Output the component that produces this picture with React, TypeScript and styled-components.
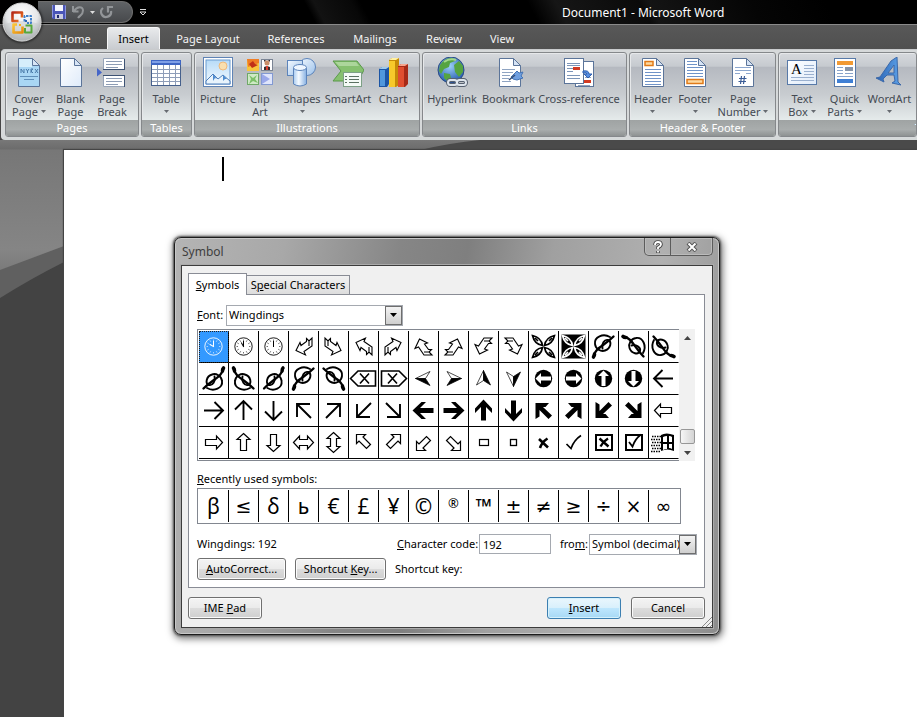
import React, { ReactNode } from 'react';
import styled, { createGlobalStyle, css } from 'styled-components';

const uiFont = '"Noto Sans", "Open Sans", sans-serif';
const dialogFont = '"Noto Sans", "DejaVu Sans Condensed", sans-serif';

const GlobalStyle = createGlobalStyle`
  *, *::before, *::after { box-sizing: border-box; }
  body { margin: 0; background: #464646; }
  button, input, select { font: inherit; color: inherit; margin: 0; padding: 0; }
  svg { display: block; }
`;

/* ---------- window chrome ---------- */

const AppWindow = styled.div`
  position: relative;
  display: flex;
  flex-direction: column;
  height: 100vh;
  min-height: 660px;
  overflow: hidden;
  font: 11px/13px ${uiFont};
`;

const TitleBar = styled.header`
  display: flex;
  align-items: center;
  height: 25px;
  flex: none;
  padding-left: 38px;
  color: #fff;
  border-bottom: 1px solid #8a8a8a;
  background: linear-gradient(62deg, #000 34%, #121212 35%, #080808 39%, #000 40%, #000 58%, #161616 61%, #0a0a0a 70%, #141414 71%, #050505 82%, #000 90%);
`;

const QuickAccess = styled.div`
  display: flex;
  align-items: center;
  gap: 5px;
  width: 95px;
  height: 22px;
  padding-left: 14px;
  border: 1px solid #6d6d6d;
  border-left: 0;
  border-radius: 0 11px 11px 0;
  background: linear-gradient(#606366, #47494c);
`;

const IconButton = styled.button`
  display: flex;
  border: 0;
  background: none;
`;

const MoreButton = styled(IconButton)`
  margin-left: 7px;
`;

const WindowTitle = styled.h1`
  flex: 1;
  margin: 0;
  padding: 2px 0 0 416px;
  font: 12px/16px ${uiFont};
  white-space: nowrap;
`;

const OfficeButton = styled.button`
  position: absolute;
  left: 2px;
  top: 2px;
  display: flex;
  width: 40px;
  height: 40px;
  padding: 0;
  border: 0;
  border-radius: 50%;
  background: none;
  box-shadow: 0 0 3px #000;
  z-index: 2;
`;

const TabStrip = styled.nav`
  display: flex;
  flex: none;
  height: 24px;
  padding-left: 45px;
  background: linear-gradient(#585858, #505050);
`;

const RibbonTab = styled.button<{ $width: number; $active?: boolean }>`
  width: ${p => p.$width}px;
  border: 0;
  background: none;
  color: #f4f4f4;
  text-align: center;
  white-space: nowrap;
  padding-top: 2px;
  ${p => p.$active && css`
    margin: 2px 2px 0;
    padding-top: 0;
    color: #000;
    border-radius: 3px 3px 0 0;
    border: 1px solid #f6f6f6;
    border-bottom: 0;
    background: linear-gradient(#e8eaec, #c9ccd0);
  `}
`;

const Ribbon = styled.div`
  display: flex;
  flex: none;
  gap: 2px;
  height: 91px;
  padding: 2px 0 1px 3px;
  margin-left: 1px;
  border: 1px solid #d8dadb;
  border-right: 0;
  border-top-color: #c9cbcd;
  border-bottom: 2px solid #d5d9d9;
  border-radius: 4px 0 0 4px;
  background: #d6d9da;
  overflow: hidden;
`;

const Group = styled.section<{ $width: number; $last?: boolean }>`
  display: flex;
  flex-direction: column;
  flex: ${p => (p.$last ? '1 0' : '0 0')} ${p => p.$width}px;
  border: 1px solid #85888b;
  border-radius: 3px;
  overflow: hidden;
  background: linear-gradient(#d6d9dd 0, #c6cacf 16%, #b5b9c0 17%, #c8ccd0 50%, #e6ecec 82%);
  box-shadow: inset 1px 1px 0 #e6e8ea;
`;

const GroupItems = styled.div`
  display: flex;
  flex: 1;
  padding: 4px 2px 0;
`;

const GroupTitle = styled.h2<{ $shift?: boolean }>`
  margin: 0;
  padding-left: ${p => (p.$shift ? 136 : 0)}px;
  height: 16px;
  font: 11px/16px ${uiFont};
  text-align: ${p => (p.$shift ? 'left' : 'center')};
  color: #fff;
  white-space: nowrap;
  background: linear-gradient(#9fa3a3, #a9adad 60%, #8e9292);
`;

const Tool = styled.button<{ $width: number }>`
  display: flex;
  flex-direction: column;
  align-items: center;
  gap: 3px;
  flex: 0 0 ${p => p.$width}px;
  border: 0;
  background: none;
  color: #444a52;
  white-space: nowrap;
`;

const ToolLabel = styled.span`
  display: flex;
  flex-direction: column;
  align-items: center;
`;

const ToolLine = styled.span`
  display: flex;
  align-items: center;
  gap: 3px;
  height: 13px;
`;

const Workspace = styled.main`
  position: relative;
  display: flex;
  flex: 1;
  padding: 10px 0 0 64px;
  background: linear-gradient(#787878, #6c6c6c 9px, #777 10px, #858585 110px, #555 200px, #444);
`;

const Backdrop = styled.svg`
  position: absolute;
  left: 0;
  top: 0;
  width: 100%;
  height: 100%;
`;

const Paper = styled.article`
  position: relative;
  flex: 1;
  padding: 7px 0 0 158px;
  background: #fff;
  box-shadow: -1px -1px 1px #444;
`;

const Caret = styled.span`
  display: block;
  width: 2px;
  height: 24px;
  background: #000;
`;

/* ---------- dialog ---------- */

const Dialog = styled.section`
  position: absolute;
  left: 174px;
  top: 237px;
  width: 546px;
  padding: 0 6px 6px;
  border: 1px solid #1c1c1c;
  border-radius: 7px;
  color: #000;
  font: 11px/14px ${dialogFont};
  background: linear-gradient(100deg, #b4b4b4 0, #a8a8a8 18%, #868686 37%, #7f7f7f 48%, #a0a0a0 62%, #b0b0b0 80%, #8c8c8c 100%);
  box-shadow: inset 0 0 0 1px #c8c8c8, 0 0 2px 1px #555, 1px 2px 7px 2px rgba(0, 0, 0, 0.5);
`;

const DialogBar = styled.header`
  display: flex;
  justify-content: space-between;
  height: 27px;
`;

const DialogTitle = styled.h2`
  margin: 0;
  padding: 6px 0 0 1px;
  font: 12px/16px ${uiFont};
  color: #3e3e3e;
`;

const WindowButtons = styled.div`
  display: flex;
  height: 18px;
  border: 1px solid #5c5c5c;
  border-top: 0;
  border-radius: 0 0 5px 5px;
  box-shadow: inset 0 0 0 1px #bbb;
`;

const WindowButton = styled.button<{ $width: number }>`
  display: flex;
  align-items: center;
  justify-content: center;
  width: ${p => p.$width}px;
  border: 0;
  background: none;
  & + & { border-left: 1px solid #5c5c5c; }
`;

const Client = styled.div`
  position: relative;
  padding: 7px 7px 8px 6px;
  border: 1px solid #3c3c3c;
  background: #f0f0f0;
  box-shadow: 0 0 0 1px #aaa;
`;

const TabList = styled.div`
  display: flex;
  align-items: flex-end;
  height: 21px;
`;

const DialogTab = styled.button<{ $width: number; $active?: boolean }>`
  width: ${p => p.$width}px;
  height: ${p => (p.$active ? 22 : 19)}px;
  border: 1px solid #898c95;
  background: linear-gradient(#f2f2f2, #ddd);
  white-space: nowrap;
  ${p => p.$active ? css`
    position: relative;
    margin-bottom: -1px;
    border-bottom: 0;
    background: #fff;
  ` : css`
    border-left: 0;
    border-bottom: 0;
  `}
`;

const Panel = styled.div`
  display: flex;
  flex-direction: column;
  padding: 10px 7px 7px 8px;
  border: 1px solid #898c95;
  background: #fff;
`;

const Row = styled.div`
  display: flex;
  align-items: center;
`;

const FontRow = styled(Row)`
  height: 20px;
  margin-bottom: 4px;
`;

const FieldLabel = styled.label<{ $width?: number }>`
  width: ${p => (p.$width ? `${p.$width}px` : 'auto')};
  white-space: nowrap;
`;

const Combo = styled.span<{ $width: number }>`
  position: relative;
  display: flex;
  width: ${p => p.$width}px;
  height: 21px;
  border: 1px solid #a5a9b0;
  background: #fff;
`;

const ComboSelect = styled.select`
  flex: 1;
  min-width: 0;
  padding: 0 17px 0 2px;
  border: 0;
  outline: 0;
  appearance: none;
  background: transparent;
`;

const ComboArrow = styled.span`
  position: absolute;
  right: 0;
  top: 0;
  bottom: 0;
  display: flex;
  align-items: center;
  justify-content: center;
  width: 17px;
  border: 1px solid #6e6e6e;
  background: linear-gradient(#f3f3f3, #cfcfcf);
  pointer-events: none;
`;

const SymbolArea = styled.div`
  display: flex;
`;

const SymbolFrame = styled.div`
  padding: 1px 0 1px 1px;
  border: 1px solid #828790;
  border-right: 0;
`;

const SymbolGrid = styled.div`
  display: grid;
  grid-template-columns: repeat(16, 30px);
  grid-auto-rows: 32px;
`;

const SymbolCell = styled.button<{ $selected?: boolean }>`
  display: flex;
  border: 0;
  border-right: 1px solid #000;
  border-bottom: 1px solid #000;
  background: #fff;
  &:nth-child(16n) { border-right-color: #fff; }
  ${p => p.$selected && css`
    color: #fff;
    background: #3399ff;
    outline: 1px dotted #222;
    outline-offset: -1px;
  `}
`;

const ScrollTrack = styled.div`
  display: flex;
  flex-direction: column;
  align-items: center;
  width: 16px;
  background: #f1f1f1;
`;

const ScrollStep = styled.button`
  display: flex;
  align-items: center;
  justify-content: center;
  width: 16px;
  height: 17px;
  border: 0;
  background: none;
`;

const ScrollThumb = styled.div`
  width: 15px;
  height: 15px;
  margin-top: auto;
  border: 1px solid #979797;
  border-radius: 2px;
  background: linear-gradient(90deg, #f6f6f6, #d4d4d4);
`;

const RecentTitle = styled.h3`
  margin: 11px 0 2px;
  font: inherit;
`;

const RecentGrid = styled.div`
  display: grid;
  grid-template-columns: repeat(16, 30px);
  align-self: flex-start;
  padding: 1px;
  border: 1px solid #828790;
`;

const RecentCell = styled.button<{ $kind: 'letter' | 'math' | 'mark' }>`
  height: 32px;
  border: 0;
  border-right: 1px solid #000;
  background: #fff;
  font: 21px/30px "Noto Sans", "DejaVu Sans", sans-serif;
  ${p => p.$kind === 'math' && css`
    font: 19px/30px "DejaVu Sans", sans-serif;
  `}
  ${p => p.$kind === 'mark' && css`
    font-size: 13px;
    line-height: 24px;
    padding-bottom: 6px;
  `}
  &:last-child { border-right-color: #fff; }
`;

const CodeRow = styled(Row)`
  height: 22px;
  margin-top: 9px;
`;

const CodeName = styled.span`
  width: 200px;
`;

const CodeInput = styled.input`
  width: 72px;
  height: 20px;
  margin: 0 9px 0 4px;
  padding: 0 3px;
  border: 1px solid #a5a9b0;
  background: #fff;
`;

const KeyRow = styled(Row)`
  gap: 9px;
  margin-top: 3px;
`;

const PushButton = styled.button<{ $width: number; $primary?: boolean }>`
  width: ${p => p.$width}px;
  height: 22px;
  border: 1px solid #707070;
  border-radius: 3px;
  white-space: nowrap;
  background: linear-gradient(#f4f4f4 0, #ebebeb 48%, #dcdcdc 52%, #cfcfcf);
  box-shadow: inset 0 0 0 1px #fbfbfb;
  ${p => p.$primary && css`
    border-color: #3c7fb1;
    background: linear-gradient(#eaf6fd 0, #d9f0fc 48%, #bee6fd 52%, #a7d9f5);
    box-shadow: inset 0 0 0 1px #d5f1fc;
  `}
`;

const Actions = styled(Row)`
  gap: 10px;
  margin-top: 9px;
`;

const Spacer = styled.span`
  flex: 1;
`;

const Grip = styled.svg`
  position: absolute;
  right: 0;
  bottom: 0;
`;

/* ---------- small drawings ---------- */

const Down = ({ fill = '#666a70', w = 5 }: { fill?: string; w?: number }) => (
  <svg width={w} height={(w + 1) / 2} viewBox="0 0 6 3" preserveAspectRatio="none"><path d="M0 0h6L3 3z" fill={fill} /></svg>
);

const OfficeLogo = () => (
  <svg width="40" height="40" viewBox="0 0 40 40">
    <defs>
      <radialGradient id="orb" cx=".5" cy=".3" r=".75">
        <stop offset="0" stopColor="#fff" /><stop offset=".55" stopColor="#e4e6e8" /><stop offset="1" stopColor="#85888c" />
      </radialGradient>
      <linearGradient id="red" x1="0" y1="0" x2="1" y2="1"><stop offset="0" stopColor="#b42818" /><stop offset="1" stopColor="#f27a22" /></linearGradient>
      <linearGradient id="yel" x1="0" y1="0" x2="1" y2="1"><stop offset="0" stopColor="#fbc63a" /><stop offset="1" stopColor="#e58a0c" /></linearGradient>
    </defs>
    <circle cx="20" cy="20" r="19" fill="url(#orb)" stroke="#d8d8d8" />
    <path d="M3 22Q20 16 37 22A17 17 0 0 1 3 22" fill="#c6c9cc" opacity=".5" />
    <g fill="none" strokeWidth="2.600" strokeLinejoin="round">
      <path d="M16.500 19h-6v-8.500h9.500v5" stroke="url(#red)" />
      <path d="M22.500 19.500v-5.500h6.500v7h-4" stroke="#3e7fc9" strokeWidth="2" strokeDasharray="2.500 1" />
      <path d="M15 22.500h-3.500v8h9v-6" stroke="url(#yel)" />
      <path d="M23 26v4.500h6.500v-7h-6" stroke="#57a83c" strokeWidth="2" />
    </g>
    <rect x="23" y="18" width="2" height="2" fill="#2d64b4" />
    <rect x="17" y="22" width="2" height="2" fill="#f5b020" />
  </svg>
);

const SaveIcon = () => (
  <svg width="14" height="14" viewBox="0 0 14 14">
    <path d="M0 0h13l1 1v13H1l-1-1z" fill="#4a55b8" />
    <path d="M0 0h1v13l-1-1zM13 0l1 1v13h-1z" fill="#8a93e0" />
    <rect x="3" y="0" width="8" height="6" fill="#f3f5ff" />
    <rect x="3" y="9" width="8" height="5" fill="#c9cbe0" />
    <rect x="5" y="10" width="2" height="3" fill="#20286c" />
  </svg>
);

const UndoIcon = () => (
  <svg width="14" height="14" viewBox="0 0 14 14" fill="none" stroke="#929598" strokeWidth="2">
    <path d="M2 6.500h5.500M2 1v6M3 6C6 1 12 1 12 5.500S9 10 7 13" />
  </svg>
);

const RedoIcon = () => (
  <svg width="14" height="14" viewBox="0 0 14 14" fill="none" stroke="#929598" strokeWidth="2.200">
    <path d="M3 3a5 5 0 1 0 8 3" /><path d="M13 2H8v5.500" />
  </svg>
);

const Sheet = ({ x = 5, y = 1, w = 22, h = 29, fill = '#fff', children }: { x?: number; y?: number; w?: number; h?: number; fill?: string; children?: ReactNode }) => (
  <g transform={`translate(${x} ${y})`}>
    <path d={`M.5.500H${w - 7.5}l7 7V${h - 0.5}H.5z`} fill={fill} stroke="#5b7499" />
    <path d={`M${w - 7.5}.500v7h7z`} fill="#d7e4f5" stroke="#5b7499" strokeLinejoin="round" />
    {children}
  </g>
);

const icons: Record<string, ReactNode> = {
  cover: (
    <Sheet fill="#a9d6f4">
      <path d="M1 1h13v8H1z" fill="#d6eefb" />
      <path d="M3 15v-4l3 4v-4M8 11l1.500 2 1.500-2M9.500 13v2M13 15v-4h2l-2 2 2 2M17 11l3 4M20 11l-3 4" fill="none" stroke="#4a7ba9" />
      <path d="M2 18.500h18M6 21.500h10" stroke="#5f8fb9" />
    </Sheet>
  ),
  blank: <Sheet fill="url(#paper)" />,
  pageBreak: (
    <g>
      <path d="M7.500 1.500h21v11h-21zM7.500 29.500v-11h21v11z" fill="#fff" stroke="#97a4b8" />
      <path d="M7 12.500h22M7 18.500h22M28.500 2v11M28.500 18v12" stroke="#3d5273" />
      <path d="M10 4.500h16M10 7.500h16M10 10.500h12M10 21.500h16M10 24.500h16M10 27.500h12" stroke="#8d9cb4" />
      <path d="M1 11l5 4.500-5 4z" fill="#4666c8" />
    </g>
  ),
  table: (
    <g>
      <rect x="1.500" y="3.500" width="29" height="25" fill="#fff" stroke="#46608c" />
      <rect x="1" y="3" width="30" height="5" fill="#3f66c4" />
      <rect x="2" y="4" width="28" height="2" fill="#7f9fe6" />
      <path d="M2 12.500h28M2 16.500h28M2 20.500h28M2 24.500h28M7.500 8v20M13.500 8v20M19.500 8v20M25.500 8v20" stroke="#8e9db8" />
    </g>
  ),
  picture: (
    <g>
      <rect x="1.500" y=".5" width="29" height="29" fill="#fff" stroke="#5f83b5" />
      <rect x="4" y="3" width="24" height="24" fill="url(#sky)" stroke="#6b9bd0" />
      <circle cx="21" cy="9" r="4" fill="#f9dfae" stroke="#eeb97c" />
      <path d="M4 24l7-7 5 5 5-4 7 6v3H4z" fill="#e8f3fc" stroke="#4e7fbb" />
      <path d="M11 17l4 5-2-1-2 3zM21 18l4 4-2 0-2 2z" fill="#4f8cd0" />
    </g>
  ),
  clip: (
    <g>
      <rect x="3" y="2" width="12" height="12" fill="#f8c53c" /><path d="M3 2h12v4L4 10z" fill="#ef7d25" /><path d="M5 7l4-3 2 3 3 1-6 3z" fill="#c03018" />
      <rect x="17.500" y="2.500" width="11" height="11" fill="#fff" stroke="#7a8494" /><circle cx="23" cy="6" r="2.500" fill="#c98d68" /><path d="M20 5q3-4 6 0v-2h-6zM20 13v-3l3-1 3 1v3z" fill="#3b2b2b" /><path d="M22 9h2v4h-2z" fill="#d94030" />
      <rect x="3.500" y="16.500" width="11" height="11" fill="#cfe9c6" stroke="#6fa868" /><path d="M5 18l4 3 4-3-2 4 3 4-5-2-4 3 2-5z" fill="#7cc069" />
      <rect x="17.500" y="16.500" width="11" height="11" fill="#dfe5fb" stroke="#8299d2" /><path d="M18 17l8 5-8 5z" fill="#9aa8ea" />
    </g>
  ),
  shapes: (
    <g stroke="#5c84bb">
      <circle cx="21" cy="10" r="8.500" fill="url(#steel)" />
      <rect x="1.500" y="3.500" width="15" height="15" fill="url(#steel)" />
      <path d="M7.500 11v16q6.500 4 13 0V11" fill="url(#tube)" /><ellipse cx="14" cy="10.500" rx="6.500" ry="3" fill="#eef6ff" />
    </g>
  ),
  smart: (
    <g>
      <path d="M1 4h24l7 9-6 11H1l8-10z" fill="#86c06f" stroke="#5a994b" /><path d="M3 5h21l3 4H7z" fill="#acd69b" />
      <rect x="11.500" y="15.500" width="18" height="14" fill="#f4faf6" stroke="#7da086" />
      <path d="M17 19.500h10M17 22.500h10M17 25.500h10M13 19.500h2M13 22.500h2M13 25.500h2" stroke="#5b7162" />
    </g>
  ),
  chart: (
    <g>
      <path d="M2 12l3-2h7v17l-2 3H2z" fill="#1c55a5" /><path d="M3 13h5v16H3z" fill="#4f97dc" /><path d="M2 12l3-2h7l-3 2z" fill="#9dc9ee" />
      <path d="M12 3l3-2h7v27l-3 2h-7z" fill="#c68a08" /><path d="M12 4h6v26h-6z" fill="#f7c92b" /><path d="M12 3l3-2h7l-3 2z" fill="#fff0a0" />
      <path d="M21 9l3-2h7v20l-3 3h-7z" fill="#a62a18" /><path d="M21 10h6v20h-6z" fill="#e04e30" /><path d="M21 9l3-2h7l-3 2z" fill="#f7a48c" />
    </g>
  ),
  link: (
    <g>
      <circle cx="15" cy="13" r="13" fill="url(#globe)" stroke="#2b4c83" />
      <path d="M4 8Q9 0 17 1l2 3-5 2-1 4-5 2-3 5-2-3zM18 8l5-4 4 5 0 6-4 5-4-5zM8 16l6 1 1 4-3 4-4-4z" fill="#55a441" />
      <path d="M8 5q6-4 12-2" stroke="#a4d88e" strokeWidth="2" fill="none" />
      <g fill="none" strokeWidth="4" stroke="#566070"><rect x="12" y="23" width="9" height="5" rx="2.500" /><rect x="21" y="23" width="9" height="5" rx="2.500" /></g>
      <g fill="none" strokeWidth="2" stroke="#dde4ec"><rect x="12" y="23" width="9" height="5" rx="2.500" /><rect x="21" y="23" width="9" height="5" rx="2.500" /></g>
    </g>
  ),
  bookmark: (
    <g>
      <Sheet x={6}><path d="M3 11.500h13M3 14.500h11M3 17.500h8M3 20.500h7M3 23.500h9" stroke="#8fa4c2" /></Sheet>
      <path d="M18 20l6-6 2 2 4-1-2 4 2 2-6 2-4-1z" fill="#6f9fe0" stroke="#4473b4" /><path d="M16 23l6-5" stroke="#334d77" strokeWidth="1.600" />
    </g>
  ),
  cross: (
    <g>
      <rect x="12.500" y="4.500" width="18" height="25" fill="#fff" stroke="#5b7499" /><path d="M20 23h8v3h-8z" fill="#d13a22" /><path d="M22 20.500h6M15 28.500h12" stroke="#90a2bd" />
      <rect x="1.500" y="1.500" width="19" height="25" fill="#fff" stroke="#5b7499" />
      <path d="M4 6.500h13M4 8.500h13M4 11.500h6M4 14.500h6M4 18.500h13M4 21.500h13" stroke="#7c95b8" /><path d="M10 10h7v3h-7z" fill="#d13a22" />
      <path d="M20 14q6-1 6 3h3l-4 4-4-4h3q0-2-4-1z" fill="#568de0" stroke="#2f5fae" />
    </g>
  ),
  header: (
    <Sheet><rect x="3" y="3.500" width="8" height="4" fill="#fdd9a0" stroke="#e07a18" strokeWidth="1.500" /><path d="M3 11.500h16M3 14.500h16M3 17.500h16M3 20.500h16M3 23.500h16M3 26.500h16" stroke="#6f93c8" /></Sheet>
  ),
  footer: (
    <Sheet><path d="M3 3.500h10M3 6.500h10M3 9.500h16M3 12.500h16M3 15.500h16M3 18.500h16" stroke="#6f93c8" /><rect x="3" y="21.500" width="16" height="4" fill="#fdd9a0" stroke="#e07a18" strokeWidth="1.500" /></Sheet>
  ),
  number: (
    <Sheet><path d="M3 9.500h16M3 12.500h16M3 15.500h5M14 15.500h5" stroke="#8ea8cf" /><path d="M9.500 18l-1 8M12.500 18l-1 8M7 20.500h7.500M6.500 23.500h7.500" stroke="#3b5c96" strokeWidth="1.200" /></Sheet>
  ),
  textBox: (
    <g>
      <rect x="1.500" y="3.500" width="29" height="24" fill="url(#paper)" stroke="#5779a8" />
      <path d="M18 8.500h10M18 11.500h10M18 14.500h10M18 17.500h10M5 20.500h23M5 23.500h23" stroke="#9ab0cf" />
      <text x="5" y="17" fontFamily="Liberation Serif, serif" fontSize="15">A</text>
    </g>
  ),
  quick: (
    <g>
      <rect x="5.500" y="1.500" width="21" height="28" fill="#fff" stroke="#5779a8" />
      <rect x="8" y="4" width="16" height="4" fill="#f29a33" /><path d="M8 10.500h6M8 13.500h6M16 16.500h8M8 16.500h6M8 19.500h16" stroke="#8aa4ca" /><rect x="16" y="10" width="8" height="4" fill="#8795a9" /><rect x="8" y="22" width="16" height="4" fill="#3f7fd4" />
    </g>
  ),
  wordArt: (
    <g fill="url(#word)" stroke="#3c68a8" strokeLinejoin="round">
      <path d="M17 4l6-4 1 25 3 3-9-2 3-2-1-6h-7l-4 4 1 3-8-4 4-1zM20 8l-6 8h6z" fillRule="evenodd" />
    </g>
  ),
};

const IconDefs = () => (
  <svg width="0" height="0" aria-hidden="true">
    <defs>
      <linearGradient id="paper" x1="0" y1="0" x2="1" y2="1"><stop offset="0" stopColor="#fff" /><stop offset="1" stopColor="#dfebfa" /></linearGradient>
      <linearGradient id="sky" x1="0" y1="0" x2="0" y2="1"><stop offset="0" stopColor="#b7dbf8" /><stop offset="1" stopColor="#f3faff" /></linearGradient>
      <linearGradient id="steel" x1="0" y1="0" x2="1" y2="1"><stop offset="0" stopColor="#f3f9ff" /><stop offset="1" stopColor="#9cc1ea" /></linearGradient>
      <linearGradient id="tube"><stop offset="0" stopColor="#a9cbf0" /><stop offset=".4" stopColor="#f5faff" /><stop offset="1" stopColor="#86b0e2" /></linearGradient>
      <radialGradient id="globe" cx=".45" cy=".35" r=".7"><stop offset="0" stopColor="#9cd0f8" /><stop offset="1" stopColor="#1b50a8" /></radialGradient>
      <linearGradient id="word"><stop offset="0" stopColor="#2a63b4" /><stop offset="1" stopColor="#5fa4ea" /></linearGradient>
    </defs>
  </svg>
);

/* ---------- symbol glyphs, drawn on a 29 x 31 cell ---------- */

const at = (m: string, node: ReactNode) => (
  <g transform={`translate(14.5 15.5) ${m} translate(-14.5 -15.5)`}>{node}</g>
);

const clock = (hour: number) => (
  <g fill="none" stroke="currentColor">
    <circle cx="14.500" cy="15.500" r="8.700" strokeWidth=".9" />
    {Array.from({ length: 12 }, (_, i) => (
      <path key={i} d="M14.500 8.600v1.200" strokeWidth=".7" transform={`rotate(${i * 30} 14.5 15.5)`} />
    ))}
    <path d="M14.500 15.500v-5.500" />
    <path d="M14.500 16v-5" transform={`rotate(${hour * 30} 14.5 15.5)`} />
  </g>
);

const ribbonArrow = <path d="M17.500 7.500L20 10l3-3v8l-8 5.500 1.500 3.500-9.500-4.500 4-8 1 3 5.500-4zM20 10v5" fill="none" stroke="currentColor" strokeWidth="1.100" />;
const petal = (color: string) => (
  <g fill="none" stroke={color} strokeWidth="1.700">
    {[0, 90, 180, 270].map(r => (
      <path key={r} d="M13.500 14.500C7.500 13.500 4.500 9 3.500 4.500 8 5.500 12.500 8.500 13.500 14.500zM6 7l3 3" transform={`rotate(${r} 14.5 15.5)`} />
    ))}
  </g>
);
const vine = (
  <g fill="none" stroke="currentColor" strokeLinecap="round">
    <path d="M4.500 25.500C6 17 15 15 24.500 5.500" strokeWidth="2.400" />
    <path d="M21 6C14 2 5 6 6 13c.5 5 6 8 10 6.500 6-2 7-9 3-10.500-3.500-1-7 4-5.500 8.500" strokeWidth="1.900" />
    <path d="M4.500 26q1-1 1-3" strokeWidth="3.600" />
  </g>
);
const erase = <path d="M1.500 15.500L9 8h17.500v15H9zM11 10.500l9 10M20 10.500l-9 10" fill="none" stroke="currentColor" strokeWidth="1.600" />;
const dart = <g><path d="M6.500 15.500L21 8.500l-4.500 7z" fill="#fff" stroke="currentColor" strokeWidth=".7" /><path d="M6.500 15.500L21 22.500l-4.500-7z" fill="currentColor" stroke="currentColor" strokeWidth=".7" /></g>;
const disc = <g><circle cx="14.500" cy="15.500" r="8.700" fill="currentColor" /><path d="M6.500 15.500l5.500-5.500v3.500H22v4H12v3.500z" fill="#fff" /></g>;
const thin = <path d="M24 15.500H6M13.500 7l-8.500 8.500 8.500 8.500" fill="none" stroke="currentColor" strokeWidth="1.900" />;
const thinDiagonal = <path d="M8 22V9h13M8.500 9.500L22 23" fill="none" stroke="currentColor" strokeWidth="1.900" />;
const heavy = <path d="M3.500 15.500l9-8.500h4.500l-6 6H24.500v5H11l6 6h-4.500z" fill="currentColor" />;
const heavyDiagonal = <path d="M6.500 8H20l-3.500 4H14l9 8.500-3.500 3.500-9-9v6.500L6.500 24z" fill="currentColor" />;
const hollow = <path d="M5.500 15.500l6-6.500v3.500h11v6h-11V22z" fill="none" stroke="currentColor" strokeWidth="1.200" />;
const hollowTwo = <path d="M4.500 15.500l6-6.500v3.500h8V9l6 6.500-6 6.500v-3.500h-8V22z" fill="none" stroke="currentColor" strokeWidth="1.200" />;
const hollowDiagonal = <path d="M7.500 7.500h9l-2.500 2.500 7.500 7.500-4 4-7.500-7.500-2.500 2.500z" fill="none" stroke="currentColor" strokeWidth="1.200" />;
const windows = (
  <g>
    <path d="M12 8q5-3 13 0v16q-7-3-13 0z" fill="currentColor" />
    <path d="M14 10q2-1 4-1v6h-4zM20 9q2 0 3 1v5h-3zM14 17h4v5q-2 0-4 1zM20 17h3v5q-1-1-3-1z" fill="#fff" />
    <path d="M3 9.500h9M2 12.500h10M3 15.500h9M2 18.500h10M3 21.500h9M2 24.500h9" stroke="currentColor" strokeWidth="1.500" strokeDasharray="1.500 1" />
  </g>
);

const glyphs: ReactNode[] = [
  clock(10), clock(11), clock(12),
  ribbonArrow, at('scale(-1 1)', ribbonArrow), at('scale(1 -1)', ribbonArrow), at('scale(-1 -1)', ribbonArrow),
  at('rotate(90)', ribbonArrow), at('rotate(90) scale(1 -1)', ribbonArrow), at('rotate(-90) scale(1 -1)', ribbonArrow), at('rotate(-90)', ribbonArrow),
  petal('currentColor'),
  <g key="leaf"><path d="M2.500 3.500h24v24h-24z" fill="currentColor" />{petal('#fff')}</g>,
  vine, at('rotate(90)', vine), at('scale(-1 1) rotate(-90) scale(1 -1)', vine),
  at('rotate(180)', vine), at('scale(1 -1)', vine), at('rotate(180) scale(.95 1)', vine), vine, at('scale(-1 1)', vine),
  erase, at('scale(-1 1)', erase),
  dart, at('scale(-1 1)', dart), at('rotate(90) scale(1 -1)', dart), at('rotate(-90)', dart),
  disc, at('scale(-1 1)', disc), at('rotate(90)', disc), at('rotate(-90)', disc),
  thin,
  at('scale(-1 1)', thin), at('rotate(90)', thin), at('rotate(-90)', thin),
  thinDiagonal, at('scale(-1 1)', thinDiagonal), at('scale(1 -1)', thinDiagonal), at('scale(-1 -1)', thinDiagonal),
  heavy, at('scale(-1 1)', heavy), at('rotate(90)', heavy), at('rotate(-90)', heavy),
  heavyDiagonal, at('scale(-1 1)', heavyDiagonal), at('scale(1 -1)', heavyDiagonal), at('scale(-1 -1)', heavyDiagonal),
  hollow,
  at('scale(-1 1)', hollow), at('rotate(90)', hollow), at('rotate(-90)', hollow), hollowTwo, at('rotate(90)', hollowTwo),
  hollowDiagonal, at('scale(-1 1)', hollowDiagonal), at('scale(1 -1)', hollowDiagonal), at('scale(-1 -1)', hollowDiagonal),
  <rect key="wide" x="10.500" y="12.500" width="9" height="6" fill="none" stroke="currentColor" strokeWidth="1.200" />,
  <rect key="small" x="11.500" y="12.500" width="6" height="6" fill="none" stroke="currentColor" strokeWidth="1.300" />,
  <path key="cross" d="M10 12l9 8.500M18.500 11.500Q13 15 11 21" fill="none" stroke="currentColor" strokeWidth="2.600" />,
  <path key="tick" d="M7.500 17l4.500 4.500Q15 13 22 8.500" fill="none" stroke="currentColor" strokeWidth="1.700" />,
  <g key="boxCross" fill="none" stroke="currentColor" strokeWidth="2"><path d="M7 8h16v15H7z" /><path d="M10.500 11.500l9 8M19 11.500q-5 3-7.500 8" strokeWidth="2.400" /></g>,
  <g key="boxTick" fill="none" stroke="currentColor" strokeWidth="2"><path d="M7 8h16v15H7z" /><path d="M10 15l3.500 4.500Q16 12 22 7.500" strokeWidth="1.800" /></g>,
  windows,
];

const recent = ['β', '≤', 'δ', 'ь', '€', '£', '¥', '©', '®', '™', '±', '≠', '≥', '÷', '×', '∞'];
const kindOf = (s: string) => (s === '®' ? 'mark' : '≤±≠≥÷×∞'.includes(s) ? 'math' : 'letter');

/* ---------- ribbon content ---------- */

type ToolSpec = { icon: string; lines: string[]; width: number; menu?: boolean };
type GroupSpec = { title: string; width: number; tools: ToolSpec[] };

const groups: GroupSpec[] = [
  { title: 'Pages', width: 134, tools: [
    { icon: 'cover', lines: ['Cover', 'Page'], width: 42, menu: true },
    { icon: 'blank', lines: ['Blank', 'Page'], width: 41 },
    { icon: 'pageBreak', lines: ['Page', 'Break'], width: 42 },
  ] },
  { title: 'Tables', width: 51, tools: [{ icon: 'table', lines: ['Table', ''], width: 44, menu: true }] },
  { title: 'Illustrations', width: 226, tools: [
    { icon: 'picture', lines: ['Picture'], width: 42 },
    { icon: 'clip', lines: ['Clip', 'Art'], width: 42 },
    { icon: 'shapes', lines: ['Shapes', ''], width: 42, menu: true },
    { icon: 'smart', lines: ['SmartArt'], width: 50 },
    { icon: 'chart', lines: ['Chart'], width: 40 },
  ] },
  { title: 'Links', width: 205, tools: [
    { icon: 'link', lines: ['Hyperlink'], width: 54 },
    { icon: 'bookmark', lines: ['Bookmark'], width: 59 },
    { icon: 'cross', lines: ['Cross-reference'], width: 82 },
  ] },
  { title: 'Header & Footer', width: 147, tools: [
    { icon: 'header', lines: ['Header', ''], width: 42, menu: true },
    { icon: 'footer', lines: ['Footer', ''], width: 42, menu: true },
    { icon: 'number', lines: ['Page', 'Number'], width: 54, menu: true },
  ] },
  { title: 'Text', width: 136, tools: [
    { icon: 'textBox', lines: ['Text', 'Box'], width: 42, menu: true },
    { icon: 'quick', lines: ['Quick', 'Parts'], width: 43, menu: true },
    { icon: 'wordArt', lines: ['WordArt', ''], width: 47, menu: true },
  ] },
];

const tabs: [string, number][] = [
  ['Home', 60], ['Insert', 53], ['Page Layout', 92], ['References', 84], ['Mailings', 74], ['Review', 64], ['View', 52],
];

const SymbolDialog = () => (
  <Dialog role="dialog" aria-labelledby="dialog-title">
    <DialogBar>
      <DialogTitle id="dialog-title">Symbol</DialogTitle>
      <WindowButtons>
        <WindowButton $width={25} aria-label="Help">
          <svg width="12" height="14" viewBox="0 0 12 14" fill="none">
            <path d="M3 5Q3 2 6 2t3 2.500Q9 6 6 7.500V9M6 11v2" stroke="#444" strokeWidth="3.500" />
            <path d="M3 5Q3 2 6 2t3 2.500Q9 6 6 7.500V9M6 11v1.500" stroke="#fff" strokeWidth="1.800" />
          </svg>
        </WindowButton>
        <WindowButton $width={42} aria-label="Close">
          <svg width="12" height="10" viewBox="0 0 12 10" fill="none">
            <path d="M2 1l8 8M10 1L2 9" stroke="#555" strokeWidth="4" />
            <path d="M2.500 1.500l7 7M9.500 1.500l-7 7" stroke="#fff" strokeWidth="2" />
          </svg>
        </WindowButton>
      </WindowButtons>
    </DialogBar>
    <Client>
      <TabList role="tablist">
        <DialogTab role="tab" aria-selected="true" $width={59} $active><u>S</u>ymbols</DialogTab>
        <DialogTab role="tab" aria-selected="false" $width={103}>S<u>p</u>ecial Characters</DialogTab>
      </TabList>
      <Panel role="tabpanel">
        <FontRow>
          <FieldLabel htmlFor="font" $width={29}><u>F</u>ont:</FieldLabel>
          <Combo $width={177}>
            <ComboSelect id="font"><option>Wingdings</option></ComboSelect>
            <ComboArrow><Down w={7} fill="#000" /></ComboArrow>
          </Combo>
        </FontRow>
        <SymbolArea>
          <SymbolFrame>
            <SymbolGrid>
              {glyphs.map((g, i) => (
                <SymbolCell key={i} $selected={i === 0} aria-label={`Character ${192 + i}`}>
                  <svg width="29" height="31" viewBox="0 0 29 31">{g}</svg>
                </SymbolCell>
              ))}
            </SymbolGrid>
          </SymbolFrame>
          <ScrollTrack>
            <ScrollStep aria-label="Scroll up"><svg width="7" height="4" viewBox="0 0 7 4"><path d="M0 4h7L3.500 0z" fill="#444" /></svg></ScrollStep>
            <ScrollThumb />
            <ScrollStep aria-label="Scroll down"><Down w={7} fill="#444" /></ScrollStep>
          </ScrollTrack>
        </SymbolArea>
        <RecentTitle><u>R</u>ecently used symbols:</RecentTitle>
        <RecentGrid>
          {recent.map(s => <RecentCell key={s} $kind={kindOf(s)}>{s}</RecentCell>)}
        </RecentGrid>
        <CodeRow>
          <CodeName>Wingdings: 192</CodeName>
          <FieldLabel htmlFor="code" $width={78}><u>C</u>haracter code:</FieldLabel>
          <CodeInput id="code" defaultValue="192" />
          <FieldLabel htmlFor="from" $width={29}>fro<u>m</u>:</FieldLabel>
          <Combo $width={108}>
            <ComboSelect id="from"><option>Symbol (decimal)</option></ComboSelect>
            <ComboArrow><Down w={7} fill="#000" /></ComboArrow>
          </Combo>
        </CodeRow>
        <KeyRow>
          <PushButton $width={89}><u>A</u>utoCorrect...</PushButton>
          <PushButton $width={91}>Shortcut <u>K</u>ey...</PushButton>
          <span>Shortcut key:</span>
        </KeyRow>
      </Panel>
      <Actions>
        <PushButton $width={74}>IME <u>P</u>ad</PushButton>
        <Spacer />
        <PushButton $width={74} $primary><u>I</u>nsert</PushButton>
        <PushButton $width={74}>Cancel</PushButton>
      </Actions>
      <Grip width="11" height="11" viewBox="0 0 11 11"><path d="M1 11L11 1M5 11l6-6M9 11l2-2" stroke="#8a8a8a" /></Grip>
    </Client>
  </Dialog>
);

export default function App() {
  return (
    <AppWindow>
      <GlobalStyle />
      <TitleBar>
        <QuickAccess>
          <IconButton aria-label="Save"><SaveIcon /></IconButton>
          <IconButton aria-label="Undo"><UndoIcon /></IconButton>
          <Down fill="#ddd" />
          <IconButton aria-label="Redo"><RedoIcon /></IconButton>
        </QuickAccess>
        <MoreButton aria-label="Customize Quick Access Toolbar">
          <svg width="6" height="7" viewBox="0 0 6 7"><path d="M0 .5h6" stroke="#ddd" /><path d="M0 3h6L3 6z" fill="none" stroke="#ddd" /></svg>
        </MoreButton>
        <WindowTitle>Document1 - Microsoft Word</WindowTitle>
      </TitleBar>
      <OfficeButton aria-label="Office"><OfficeLogo /></OfficeButton>
      <TabStrip>
        {tabs.map(([name, width]) => (
          <RibbonTab key={name} $width={width} $active={name === 'Insert'}>{name}</RibbonTab>
        ))}
      </TabStrip>
      <Ribbon>
        {groups.map(g => (
          <Group key={g.title} $width={g.width} $last={g.title === 'Text'}>
            <GroupItems>
              {g.tools.map(t => (
                <Tool key={t.icon} $width={t.width}>
                  <svg width="32" height="32" viewBox="0 0 32 32">{icons[t.icon]}</svg>
                  <ToolLabel>
                    {t.lines.map((line, i) => (
                      <ToolLine key={i}>{line}{t.menu && i === t.lines.length - 1 && <Down />}</ToolLine>
                    ))}
                  </ToolLabel>
                </Tool>
              ))}
            </GroupItems>
            <GroupTitle $shift={g.title === 'Text'}>{g.title}</GroupTitle>
          </Group>
        ))}
      </Ribbon>
      <Workspace>
        <Backdrop viewBox="0 0 917 577" preserveAspectRatio="xMinYMin slice">
          <path d="M0 130Q32 118 64 106V577H0z" fill="#606060" />
          <path d="M0 158Q32 138 64 122V577H0z" fill="#434343" />
          <path d="M420 10Q450 3 480 0H917V10z" fill="#4a4a4a" />
        </Backdrop>
        <Paper><Caret /></Paper>
      </Workspace>
      <SymbolDialog />
      <IconDefs />
    </AppWindow>
  );
}
